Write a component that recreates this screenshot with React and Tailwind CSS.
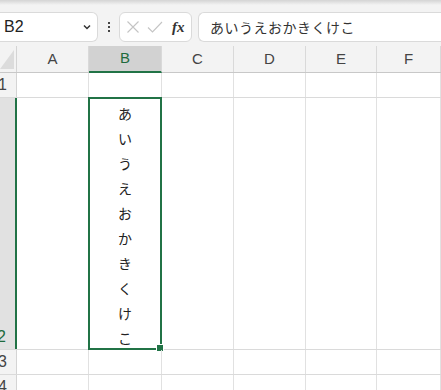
import React from "react";

const COLS = [
  { key: "A", w: "w-[72px]" },
  { key: "B", w: "w-[73px]" },
  { key: "C", w: "w-[72px]" },
  { key: "D", w: "w-[72px]" },
  { key: "E", w: "w-[71px]" },
  { key: "F", w: "flex-1" },
];

const KANA = ["あ", "い", "う", "え", "お", "か", "き", "く", "け", "こ"];

function Toolbar() {
  return (
    <div className="h-[46px] bg-[#f3f3f3] relative flex items-start pt-[12px]">
      <div className="absolute left-0 right-0 top-0 h-[5px] bg-gradient-to-b from-[#d4d4d4] to-[#f3f3f3]" />
      {/* Name box */}
      <div className="w-[98px] h-[30px] bg-white border border-l-0 border-[#dadada] rounded-r-md flex items-center justify-between pl-[4px] pr-[5px]">
        <span className="text-[16px] text-[#222]">B2</span>
        <svg width="10" height="10" viewBox="0 0 10 10">
          <path d="M2 3.5 L5 6.5 L8 3.5" stroke="#333" strokeWidth="1.5" fill="none" />
        </svg>
      </div>
      <div className="w-[21px] h-[30px] flex flex-col items-center justify-center gap-[2px]">
        <span className="w-[2px] h-[2px] bg-[#444]" />
        <span className="w-[2px] h-[2px] bg-[#444]" />
        <span className="w-[2px] h-[2px] bg-[#444]" />
      </div>
      {/* cancel / enter / fx */}
      <div className="w-[73px] h-[30px] bg-white border border-[#dadada] rounded-md flex items-center pl-[6px] gap-[7px]">
        <svg width="14" height="14" viewBox="0 0 14 14">
          <path d="M1.5 1.5 L12.5 12.5 M12.5 1.5 L1.5 12.5" stroke="#c4c4c4" strokeWidth="1.1" />
        </svg>
        <svg width="16" height="14" viewBox="0 0 16 14">
          <path d="M1 7.5 L5.5 12 L15 2" stroke="#c4c4c4" strokeWidth="1.1" fill="none" />
        </svg>
        <span className="ml-[2px] text-[15px] italic font-bold text-[#333] font-['Liberation_Serif',serif]">fx</span>
      </div>
      {/* formula bar */}
      <div className="ml-[6px] flex-1 h-[30px] bg-white border border-r-0 border-[#dadada] rounded-l-md flex items-center pl-[11px]">
        <span className="text-[14px] text-[#333] tracking-[0.5px] font-['Noto_Sans_CJK_JP',sans-serif]">あいうえおかきくけこ</span>
      </div>
    </div>
  );
}

function HeaderRow() {
  return (
    <div className="flex h-[27px] bg-[#f3f3f3] border-b border-[#c8c8c8]">
      <div className="w-[17px] shrink-0 border-r border-[#d4d4d4] relative">
        <svg className="absolute left-0 top-[4px]" width="14" height="19" viewBox="0 0 14 19">
          <path d="M14 0 L14 19 L0 19 Z" fill="#dcdcdc" />
        </svg>
      </div>
      {COLS.map((c) => (
        <div
          key={c.key}
          className={`${c.w} shrink-0 flex items-center justify-center text-[15px] border-r border-[#d9d9d9] ${
            c.key === "B"
              ? "bg-[#d2d2d2] text-[#1e6b3d] border-b-2 border-b-[#217346] -mb-px"
              : "text-[#444]"
          }`}
        >
          {c.key}
        </div>
      ))}
    </div>
  );
}

function Row({ num, h, selected, children }) {
  return (
    <div className={`flex ${h} border-b border-[#dadada]`}>
      <div
        className={`w-[17px] shrink-0 flex justify-end overflow-hidden text-[16px] pr-[9px] ${
          selected
            ? "bg-[#e1e1e1] text-[#1e6b3d] border-r-2 border-[#217346] items-end"
            : "bg-[#f3f3f3] text-[#444] border-r border-[#d4d4d4] items-center"
        }`}
      >
        <span className="leading-[24px]">{num}</span>
      </div>
      {COLS.map((c) => (
        <div key={c.key} className={`${c.w} shrink-0 border-r border-[#e1e1e1] relative`}>
          {c.key === "B" ? children : null}
        </div>
      ))}
    </div>
  );
}

export default function App() {
  return (
    <div className="w-[441px] h-[390px] overflow-hidden bg-white font-['Liberation_Sans',sans-serif]">
      <Toolbar />
      <HeaderRow />
      <Row num="1" h="h-[25px]" />
      <Row num="2" h="h-[252px]" selected>
        <div className="absolute -left-[1px] -top-[1px] -right-[1px] -bottom-[1px] border-2 border-[#217346] flex flex-col items-center pt-[2px] text-[14px] text-[#222] font-['Noto_Sans_CJK_JP',sans-serif]">
          {KANA.map((k) => (
            <span key={k} className="h-[25px] leading-[25px]">{k}</span>
          ))}
          <span className="absolute -right-[4px] -bottom-[4px] w-[6px] h-[6px] bg-[#217346] border border-white box-content" />
        </div>
      </Row>
      <Row num="3" h="h-[25px]" />
      <Row num="4" h="h-[25px]" />
    </div>
  );
}
